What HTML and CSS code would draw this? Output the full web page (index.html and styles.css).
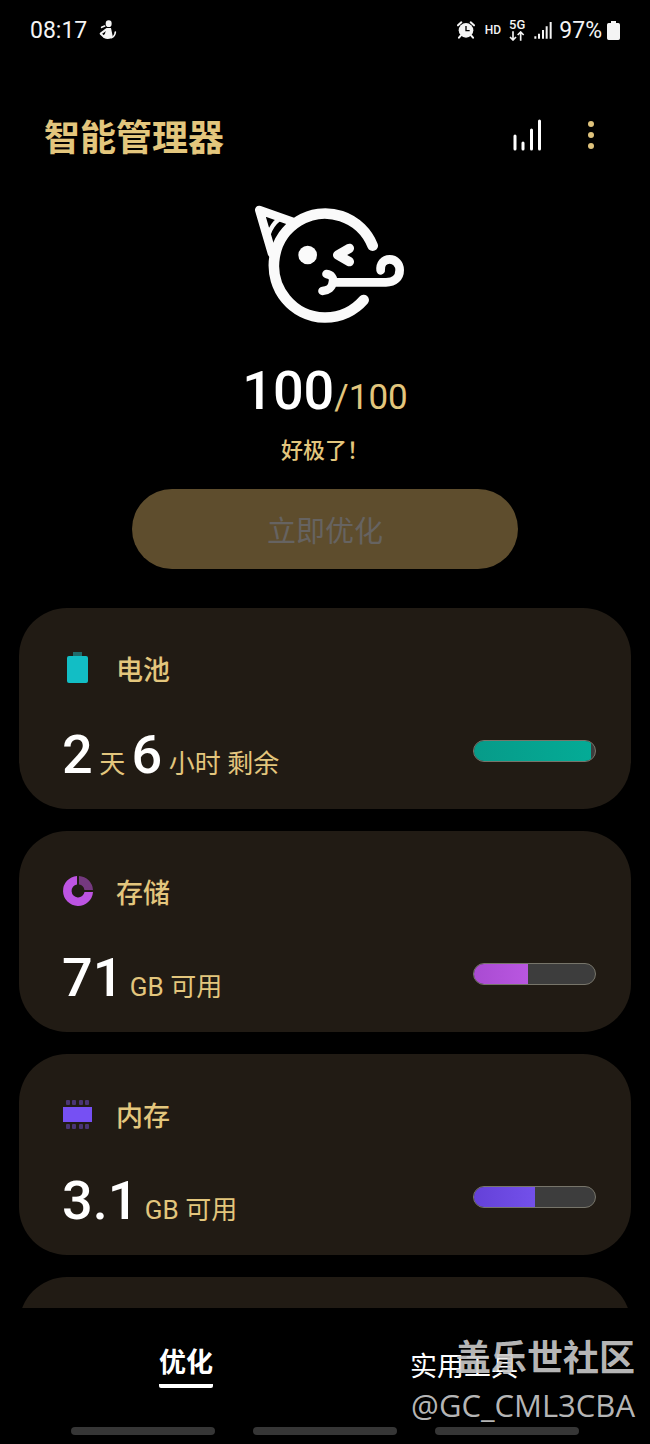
FILE: index.html
```html
<!DOCTYPE html>
<html lang="zh-CN">
<head>
<meta charset="utf-8">
<meta name="viewport" content="width=device-width, initial-scale=1">
<title>智能管理器</title>
<link rel="stylesheet" href="styles.css">
</head>
<body>
<div class="statusbar">
  <div class="status-left">
    <span class="clock">08:17</span>
    <svg class="icon-person" viewBox="0 0 54 60" width="18" height="20" fill="none" stroke="#f4f4f4" stroke-linecap="round" stroke-linejoin="round" aria-hidden="true">
      <ellipse cx="29" cy="11" rx="9" ry="10" fill="#f4f4f4" stroke="none"/>
      <path d="M22 24h14l5 24q-3 9-15 9t-15-8l7-8z" fill="#f4f4f4" stroke="none"/>
      <path d="M22 28L5 41L15 50" stroke-width="6"/>
      <path d="M37 53q11-4 12-17" stroke-width="5"/>
      <path d="M8 22l9-4" stroke-width="5"/>
    </svg>
  </div>
  <div class="status-right">
    <svg class="icon-alarm" viewBox="0 0 54 54" width="18" height="18" aria-label="闹钟">
      <circle cx="27" cy="28" r="22" fill="#f4f4f4"/>
      <path d="M3 13L13 4M51 13L41 4M11 44l-5 6M43 44l5 6" stroke="#f4f4f4" stroke-width="6" stroke-linecap="round"/>
      <path d="M27 15v14h11" fill="none" stroke="#000" stroke-width="4"/>
    </svg>
    <span class="hd">HD</span>
    <span class="net">
      <span>5G</span>
      <svg viewBox="0 0 48 30" width="16" height="10" aria-hidden="true">
        <path d="M12 1v26M3 18l9 9 9-9M35 29V3M26 12l9-9 9 9" fill="none" stroke="#f4f4f4" stroke-width="5"/>
      </svg>
    </span>
    <svg class="icon-signal" viewBox="0 0 54 54" width="18" height="18" aria-label="信号">
      <path d="M4 46v7M15 38v15M27 27v26M38 16v37M50 3v50" stroke="#f4f4f4" stroke-width="6"/>
    </svg>
    <span class="percent">97%</span>
    <svg viewBox="0 0 39 57" width="13" height="19" aria-label="电量">
      <path fill="#f4f4f4" d="M12 0h15v6h7q5 0 5 5v41q0 5-5 5H5q-5 0-5-5V11q0-5 5-5h7z"/>
    </svg>
  </div>
</div>

<header class="header">
  <h1 class="title">智能管理器</h1>
  <div class="actions">
    <button class="icon-button" type="button" aria-label="统计">
      <svg viewBox="0 0 30 34" width="30" height="34"><path d="M3 18v13M11 25v6M19.500 12v19M27.500 3v28" stroke="#fff" stroke-width="3" stroke-linecap="round"/></svg>
    </button>
    <button class="icon-button" type="button" aria-label="更多选项">
      <svg viewBox="0 0 8 30" width="8" height="30" fill="#dfc37d"><circle cx="4" cy="4" r="3"/><circle cx="4" cy="15" r="3"/><circle cx="4" cy="26" r="3"/></svg>
    </button>
  </div>
</header>

<main class="content">
  <section class="hero">
    <svg class="face" viewBox="-15 0 540 420" width="180" height="140" fill="none" stroke="#fafafa" stroke-linecap="round" stroke-linejoin="round" aria-hidden="true">
      <path d="M398 167A154 156 0 1 0 371 330" stroke-width="32"/>
      <path d="M160 96L58 60L96 190" stroke-width="26"/>
      <path d="M117 88Q96 104 86 132" stroke-width="13"/>
      <circle cx="203" cy="195" r="28" fill="#fafafa" stroke="none"/>
      <path d="M328 175L293 195L328 215" stroke-width="28"/>
      <path d="M259 252C275 254 282 265 278 277C277 292 264 302 247 303" stroke-width="25"/>
      <path d="M282 277H438C464 277 479 262 479 240C479 222 466 208 449 208C431 208 420 222 422 241" stroke-width="26"/>
    </svg>
    <p class="score"><span class="score-now">100</span><span class="score-max">/100</span></p>
    <p class="message">好极了！</p>
    <button class="optimize" type="button" disabled>立即优化</button>
  </section>

  <section class="card">
    <h2 class="card-title">
      <svg viewBox="0 0 32 32" width="32" height="32" aria-hidden="true"><path d="M11 0h9v4h-9z" fill="#1f6b6b"/><rect x="5" y="4" width="21" height="27" rx="2" fill="#12bec5"/></svg>
      电池
    </h2>
    <div class="card-row">
      <p class="value"><b>2</b> 天 <b>6</b> 小时 剩余</p>
      <div class="bar" role="progressbar" aria-label="电池" aria-valuenow="97"><span class="fill fill-battery" style="width:97%"></span></div>
    </div>
  </section>

  <section class="card">
    <h2 class="card-title">
      <svg viewBox="0 0 32 32" width="32" height="32" aria-hidden="true"><path d="M15 1A15 15 0 1 0 31 17H22.500A6.500 6.500 0 1 1 15 9.500z" fill="#bd54e2"/><path d="M17 1A15 15 0 0 1 31 15H22.400A6.500 6.500 0 0 0 17 9.600z" fill="#74397f"/></svg>
      存储
    </h2>
    <div class="card-row">
      <p class="value"><b>71</b> GB 可用</p>
      <div class="bar" role="progressbar" aria-label="存储" aria-valuenow="45"><span class="fill fill-storage" style="width:45%"></span></div>
    </div>
  </section>

  <section class="card">
    <h2 class="card-title">
      <svg viewBox="0 0 32 32" width="32" height="32" aria-hidden="true"><path d="M1 9h29v15H1z" fill="#7650f3"/><g fill="#4a3575"><rect x="4" y="2" width="4" height="5" rx="1"/><rect x="10" y="2" width="4" height="5" rx="1"/><rect x="17" y="2" width="4" height="5" rx="1"/><rect x="23" y="2" width="4" height="5" rx="1"/><rect x="4" y="26" width="4" height="5" rx="1"/><rect x="10" y="26" width="4" height="5" rx="1"/><rect x="17" y="26" width="4" height="5" rx="1"/><rect x="23" y="26" width="4" height="5" rx="1"/></g></svg>
      内存
    </h2>
    <div class="card-row">
      <p class="value"><b>3.1</b> GB 可用</p>
      <div class="bar" role="progressbar" aria-label="内存" aria-valuenow="50"><span class="fill fill-memory" style="width:50%"></span></div>
    </div>
  </section>

  <section class="card"></section>
</main>

<footer class="footer">
  <nav class="tabs">
    <a class="tab tab-active" href="#optimize">优化</a>
    <a class="tab" href="#tools">实用工具</a>
  </nav>
  <div class="sysnav"><span></span><span></span><span></span></div>
  <div class="watermark">
    <strong>盖乐世社区</strong>
    <span>@GC_CML3CBA</span>
  </div>
</footer>
</body>
</html>
```

FILE: styles.css
```css
* { box-sizing: border-box; }

body {
  margin: 0;
  height: 100vh;
  display: flex;
  flex-direction: column;
  overflow: hidden;
  background: #000;
  color: #e3c67d;
  font-family: Roboto, "Noto Sans CJK SC", sans-serif;
}

h1, h2, p { margin: 0; }
svg { display: block; flex: none; }
button { font: inherit; border: 0; padding: 0; background: none; }

.statusbar {
  flex: none;
  height: 60px;
  padding: 0 30px;
  display: flex;
  justify-content: space-between;
  align-items: center;
  color: #f4f4f4;
  font-size: 23px;
}
.status-left, .status-right { display: flex; align-items: center; }
.status-left { gap: 12px; }
.icon-alarm { margin-right: 10px; }
.hd { margin-right: 8px; font-size: 12px; font-weight: 500; }
.net {
  display: flex;
  flex-direction: column;
  align-items: center;
  margin-right: 9px;
  font-size: 13px;
  font-weight: 500;
  line-height: 12px;
}
.icon-signal { margin-right: 7px; }
.percent { margin-right: 5px; }

.header {
  flex: none;
  display: flex;
  justify-content: space-between;
  align-items: center;
  padding: 52px 55px 24px 44px;
}
.title { font-size: 36px; line-height: 54px; font-weight: 700; }
.actions { display: flex; align-items: center; gap: 45px; padding-bottom: 8px; }
.icon-button { display: block; }

.content {
  flex: 1;
  min-height: 0;
  overflow: hidden;
  display: flex;
  flex-direction: column;
  gap: 22px;
  padding: 0 19px;
}
.hero {
  flex: none;
  display: flex;
  flex-direction: column;
  align-items: center;
  padding-bottom: 17px;
}
.score { margin-top: 29px; line-height: 36px; color: #e3c67d; }
.score-now { font-size: 54px; line-height: 64px; font-weight: 500; color: #fff; }
.score-max { font-size: 35px; }
.message { margin-top: 12px; font-size: 22px; line-height: 32px; font-weight: 500; }
.optimize {
  width: 63%;
  height: 80px;
  margin-top: 22px;
  border-radius: 40px;
  background: #5e4d2d;
  color: #666361;
  font-size: 29px;
}

.card {
  flex: none;
  min-height: 201px;
  padding: 44px 35px 21px 43px;
  border-radius: 48px;
  background: #211b14;
}
.card-title {
  display: flex;
  align-items: flex-start;
  gap: 22px;
  font-size: 27px;
  line-height: 38px;
  font-weight: 500;
}
.card-row {
  display: flex;
  justify-content: space-between;
  align-items: flex-start;
  margin-top: 32px;
}
.value { font-size: 26px; line-height: 26px; white-space: nowrap; }
.value b { font-size: 54px; line-height: 66px; font-weight: 500; color: #fff; }
.bar {
  width: 123px;
  height: 22px;
  margin-top: 18px;
  border: 1px solid #77756a;
  border-radius: 11px;
  overflow: hidden;
  background: #3d3d3d;
}
.fill { display: block; height: 100%; }
.fill-battery { background: linear-gradient(90deg, #079b89, #04ab96); }
.fill-storage { background: linear-gradient(90deg, #a94bd2, #b957e0); }
.fill-memory { background: linear-gradient(90deg, #6441d8, #7350ea); }

.footer {
  position: relative;
  flex: none;
  display: flex;
  flex-direction: column;
  justify-content: space-between;
  height: 136px;
  padding: 34px 0 9px;
}
.tabs {
  display: grid;
  grid-template-columns: 1fr 1fr;
  align-items: end;
  justify-items: center;
  padding: 0 47px;
}
.tab { color: #fff; font-size: 27px; line-height: 42px; text-decoration: none; }
.tab-active { font-weight: 700; border-bottom: 4px solid #fff; border-radius: 2px; }
.sysnav { display: flex; gap: 38px; padding: 0 71px; }
.sysnav span { flex: 1; height: 8px; border-radius: 4px; background: #363636; }
.watermark {
  position: absolute;
  right: 15px;
  top: 27px;
  display: flex;
  flex-direction: column;
  align-items: flex-end;
  color: rgba(200, 200, 200, 0.92);
  pointer-events: none;
}
.watermark strong { font-size: 36px; line-height: 48px; font-weight: 700; }
.watermark span { font-family: "Open Sans", sans-serif; font-size: 31px; line-height: 44px; }
```
